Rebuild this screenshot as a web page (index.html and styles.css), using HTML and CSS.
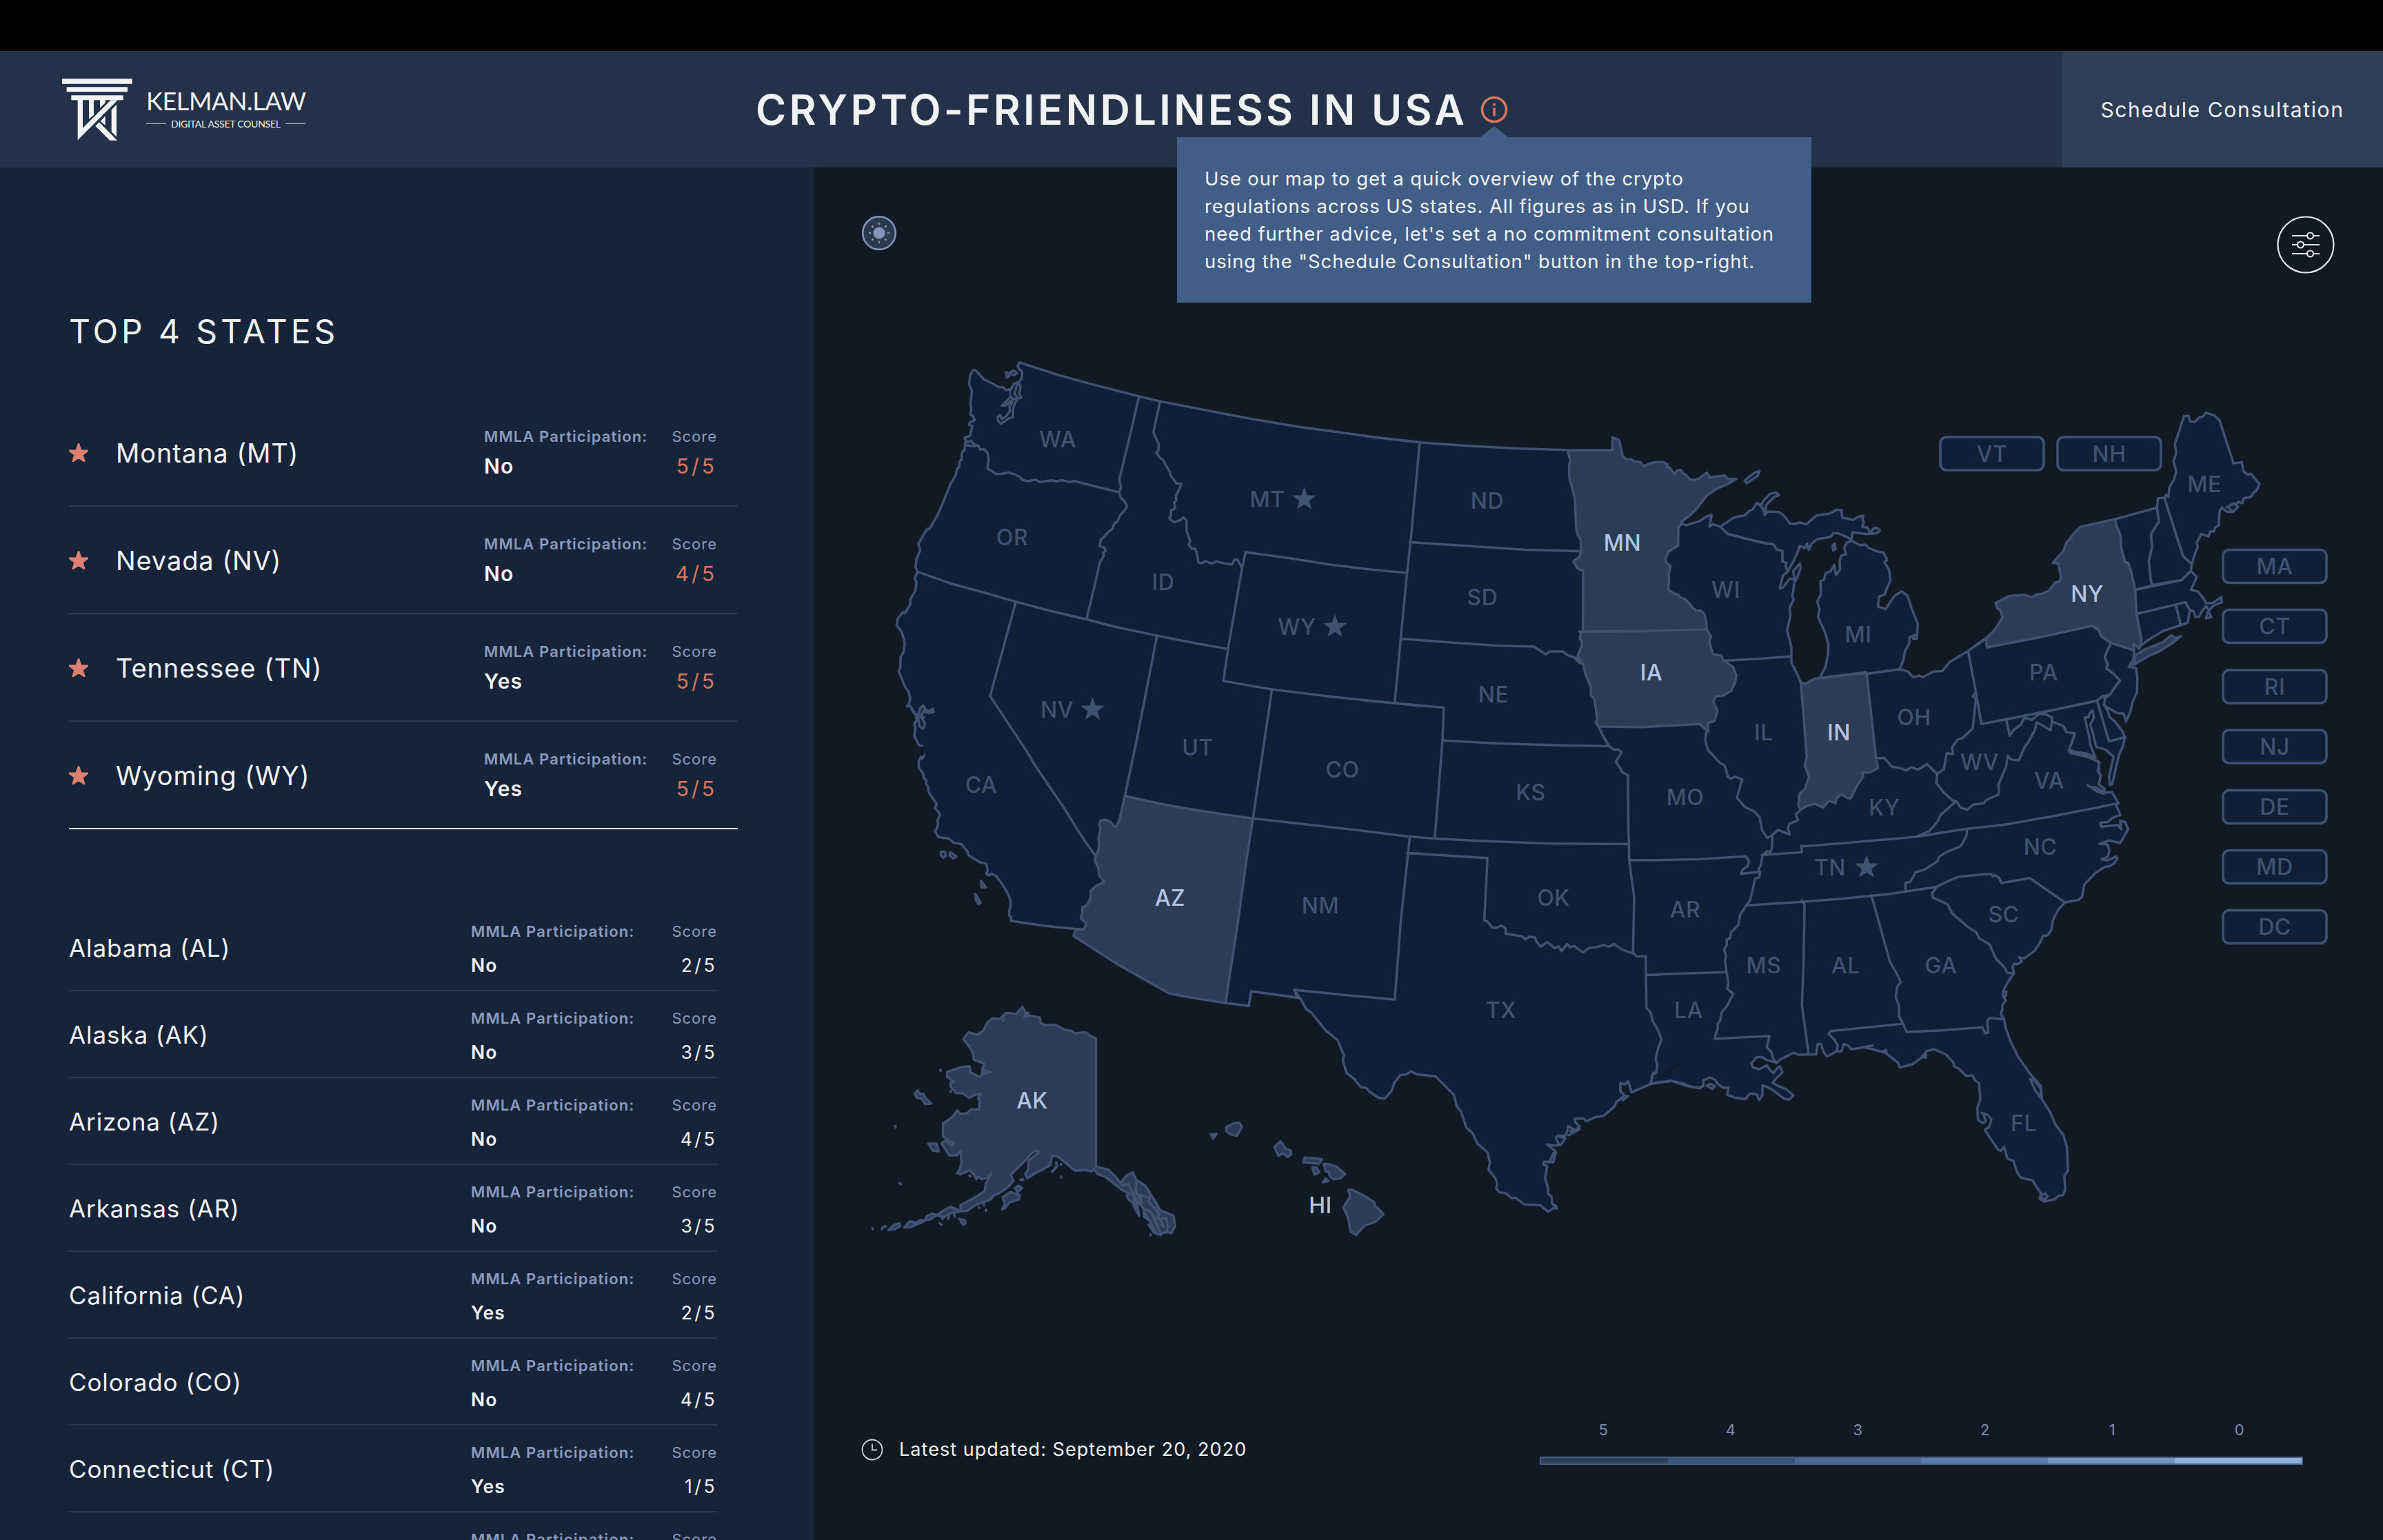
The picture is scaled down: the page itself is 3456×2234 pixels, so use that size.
FILE: index.html
```html
<!DOCTYPE html>
<html lang="en">
<head>
<meta charset="utf-8">
<title>Crypto-Friendliness in USA</title>
<link rel="stylesheet" href="styles.css">
</head>
<body>
<svg class="defs" width="0" height="0" aria-hidden="true">
  <symbol id="star" viewBox="-17 -17 34 32">
    <path d="M0-17 4.2-4.9 17-4.6 6.8 3.100 10.5 15 0 8-10.5 15-6.8 3.100-17-4.6-4.2-4.9Z"/>
  </symbol>
</svg>
<div class="page">
  <div class="system-bar"></div>

  <header class="header">
    <div class="brand">
      <svg class="brand-logo" viewBox="0 0 400 130" width="400" height="130">
        <g class="logo-mark" transform="scale(.33333)">
          <path d="M60 73H365V95H60ZM80 109H345V130H80ZM100 145H326V166H100Z"/>
          <path d="M128 160H150V287L272 166H302L128 340ZM177 160H198V230L177 248ZM225 160H248V178L225 200ZM297 185V325L275 303V208ZM227 258 248 235V275ZM205 278 222 262 300 341H268Z"/>
        </g>
        <text class="logo-name" x="142" y="69.5" textLength="232">KELMAN.LAW</text>
        <text class="logo-sub" x="178" y="95" textLength="159">DIGITAL ASSET COUNSEL</text>
        <path class="logo-rule" d="M142 89.3H171M344 89.3H373"/>
      </svg>
    </div>
    <div class="headline">
      <h1 class="title">CRYPTO-FRIENDLINESS IN USA</h1>
      <div class="info">
        <svg viewBox="0 0 40 40" width="40" height="40" class="info-icon">
          <circle cx="20" cy="20" r="17.5"/>
          <path d="M20 17.5V29.5M20 11V14.5"/>
        </svg>
        <div class="tooltip">Use our map to get a quick overview of the crypto<br>regulations across US states. All figures as in USD. If you<br>need further advice, let's set a no commitment consultation<br>using the "Schedule Consultation" button in the top-right.</div>
      </div>
    </div>
    <a class="schedule">Schedule Consultation</a>
  </header>

  <main class="main">
    <aside class="sidebar">
      <h2 class="sidebar-title">TOP 4 STATES</h2>
      <ul class="list top-list">
        <li class="row"><svg class="star" width="28" height="27"><use href="#star"/></svg><span class="name">Montana (MT)</span><div class="cell"><span class="label strong">MMLA Participation:</span><span class="value">No</span></div><div class="cell score"><span class="label">Score</span><span class="points">5/5</span></div></li>
        <li class="row"><svg class="star" width="28" height="27"><use href="#star"/></svg><span class="name">Nevada (NV)</span><div class="cell"><span class="label strong">MMLA Participation:</span><span class="value">No</span></div><div class="cell score"><span class="label">Score</span><span class="points">4/5</span></div></li>
        <li class="row"><svg class="star" width="28" height="27"><use href="#star"/></svg><span class="name">Tennessee (TN)</span><div class="cell"><span class="label strong">MMLA Participation:</span><span class="value">Yes</span></div><div class="cell score"><span class="label">Score</span><span class="points">5/5</span></div></li>
        <li class="row"><svg class="star" width="28" height="27"><use href="#star"/></svg><span class="name">Wyoming (WY)</span><div class="cell"><span class="label strong">MMLA Participation:</span><span class="value">Yes</span></div><div class="cell score"><span class="label">Score</span><span class="points">5/5</span></div></li>
      </ul>
      <ul class="list all-list">
        <li class="row"><span class="name">Alabama (AL)</span><div class="cell"><span class="label strong">MMLA Participation:</span><span class="value">No</span></div><div class="cell score"><span class="label">Score</span><span class="points">2/5</span></div></li>
        <li class="row"><span class="name">Alaska (AK)</span><div class="cell"><span class="label strong">MMLA Participation:</span><span class="value">No</span></div><div class="cell score"><span class="label">Score</span><span class="points">3/5</span></div></li>
        <li class="row"><span class="name">Arizona (AZ)</span><div class="cell"><span class="label strong">MMLA Participation:</span><span class="value">No</span></div><div class="cell score"><span class="label">Score</span><span class="points">4/5</span></div></li>
        <li class="row"><span class="name">Arkansas (AR)</span><div class="cell"><span class="label strong">MMLA Participation:</span><span class="value">No</span></div><div class="cell score"><span class="label">Score</span><span class="points">3/5</span></div></li>
        <li class="row"><span class="name">California (CA)</span><div class="cell"><span class="label strong">MMLA Participation:</span><span class="value">Yes</span></div><div class="cell score"><span class="label">Score</span><span class="points">2/5</span></div></li>
        <li class="row"><span class="name">Colorado (CO)</span><div class="cell"><span class="label strong">MMLA Participation:</span><span class="value">No</span></div><div class="cell score"><span class="label">Score</span><span class="points">4/5</span></div></li>
        <li class="row"><span class="name">Connecticut (CT)</span><div class="cell"><span class="label strong">MMLA Participation:</span><span class="value">Yes</span></div><div class="cell score"><span class="label">Score</span><span class="points">1/5</span></div></li>
        <li class="row"><span class="name"></span><div class="cell"><span class="label strong">MMLA Participation:</span></div><div class="cell score"><span class="label">Score</span></div></li>
      </ul>
    </aside>

    <section class="map-view">
      <div class="map-tools">
        <svg class="theme-icon" viewBox="-26 -26 52 52" width="52" height="52">
          <circle class="ring" r="23.8"/>
          <circle class="sun" r="8.5"/>
          <path class="rays" d="M0-15V-12M0 15V12M-15 0H-12M15 0H12M-10.6-10.6-8.5-8.5M10.6-10.6 8.5-8.5M-10.6 10.6-8.5 8.5M10.6 10.6 8.5 8.5"/>
        </svg>
        <svg class="filter-icon" viewBox="-43 -43 86 86" width="86" height="86">
          <circle r="40.5"/>
          <path d="M-20-13H2M11-13H20M-20 0H-12M-3 0H20M-20 13H2M11 13H20"/>
          <circle cx="6.5" cy="-13" r="4.5"/><circle cx="-7.5" cy="0" r="4.5"/><circle cx="6.5" cy="13" r="4.5"/>
        </svg>
      </div>

      <svg class="map" viewBox="1180 460 2276 1400" width="2276" height="1400">
        <!-- coastlines and outer states -->
        <g class="land" transform="translate(1260 500) scale(.5102 .35714)">
          <path d="M132 1568 130 1540 137 1525 134 1505 126 1490 118 1468 108 1468 114 1460 118 1435 112 1408 103 1390 85 1326 90 1310 90 1270 99 1248 102 1210 93 1165 79 1140 82 1113 98 1085 103 1090 118 1055 118 1035 132 1000 136 965 130 950 139 922 133 905 135 872 146 835 141 808 166 748 172 750 197 688 217 620 232 567 247 530 251 505 257 495 258 475 264 465 264 445 268 430 272 430 274 398 278 395 272 378 288 370 294 330 285 325 288 315 301 306 296 290 289 285 291 262 289 240 293 188 285 160 288 125 296 103 304 105 328 142 352 158 370 173 382 173 390 185 402 180 404 210 395 225 378 248 388 248 408 225 405 245 400 248 401 270 391 290 378 303 374 285 366 295 368 312 376 321 398 300 409 295 410 262 416 236 424 218 434 215 428 200 431 170 426 155 435 135 436 108 428 100 423 88 428 72 540 124 625 157 768 210 828 230 950 264 1090 302 1220 333 1340 356 1450 378 1568 396"/>
          <path d="M134 1500 142 1505 146 1478 155 1466 160 1480 170 1490 182 1480 184 1492 170 1496 156 1488 150 1505 156 1515M140 1510 144 1550 154 1560 160 1540 150 1515 140 1500M390 112 400 118 398 130 392 133ZM402 112 412 105 421 115 414 124 406 120ZM404 182 412 160 424 152 418 180 414 200 424 216 412 222 404 212"/>
        </g>
        <g class="land" transform="translate(1260 960) scale(.5102 .3444)">
          <path d="M609 1129 500 1112 405 1092 404 1075 399 1068 399 1045 403 1035 403 1008 395 975 380 938 362 902 348 892 342 900 334 893 338 880 334 850 316 845 284 816 280 798 262 767 242 763 228 745 198 738 188 713 194 700 197 680 195 668 203 643 188 615 193 598 185 582 170 548 168 525 163 515 163 498 157 490 153 468 142 445 142 420 148 400 152 408 162 385 160 355 143 352 129 312 133 285 130 262 137 245 134 225 118 188"/>
          <path d="M1092 660 1250 686 1400 711 1538 735 1533 806 1513 1080 1495 1423 1350 1403 1210 1382 1225 1416 1087 1388 1080 1450 1014 1437 1050 1090Z"/>
          <path d="M205 800 217 800 219 818 211 825 205 815ZM232 802 249 820 240 828 229 816ZM319 922 333 950 320 950ZM303 978 318 1015 311 1020 305 1005Z"/>
        </g>
        <g class="land" transform="translate(1980 600) scale(.4847 .4082)">
          <path d="M1062 402 1105 368 1135 362 1150 345 1158 342 1172 318 1185 325 1192 308 1212 285 1230 280 1238 290 1222 297 1200 325 1195 360 1205 348 1238 350 1252 362 1272 392 1285 392 1300 387 1320 393 1350 362 1390 355 1410 342 1425 343 1427 370 1443 373 1460 378 1473 368 1490 362 1488 378 1492 385 1487 402 1502 405 1512 425 1520 408 1532 406 1540 415 1532 425 1500 428 1458 422 1455 448 1440 438 1415 425 1400 425 1393 438 1350 447 1335 463 1327 485 1322 462 1315 478 1300 470 1295 490 1283 520 1265 560 1258 545 1260 530 1248 525 1248 488 1230 482 1222 465 1185 458 1085 428Z"/>
          <path d="M1135 238 1165 210 1180 204 1175 220 1142 248ZM1398 470 1404 462 1407 482 1400 487ZM1174 318 1188 335 1195 358"/>
        </g>
        <g class="land" transform="translate(2400 580) scale(.6633 .35714)">
          <path d="M430 572 448 590 460 588 468 602 485 615 500 620 508 650 502 660 512 690 515 735 505 775 503 790 490 800 488 840 505 850 515 820 525 795 540 778 552 795 562 850 575 912 573 970 565 970 568 955 557 965 556 990 547 1020 543 1060 535 1095 463 1113 462 1107 360 1130 373 1085 379 1030 379 990 372 945 357 882 360 850 355 820 363 790 362 737 370 730 373 705 385 695 392 670 396 712 405 690 404 655 407 633 418 628 414 600 420 580Z"/>
          <path d="M714 1317 768 1298 870 1260 967 1222 993 1387 1028 1370 1023 1410 1015 1440 1010 1480 1000 1560 995 1565 993 1530 1003 1450 985 1420 965 1410 957 1350 952 1320 960 1290 957 1262 950 1275 948 1290 940 1290 946 1340 950 1370 952 1400 963 1452 945 1437 920 1430 905 1425 912 1390 918 1355 900 1350 893 1325 880 1315 868 1308 868 1290 855 1278 840 1275 825 1300 808 1292 800 1320 785 1340 776 1365 768 1298Z"/>
          <path d="M724 968 726 1005 840 965 956 918 970 935 976 960 998 988 990 1015 984 1045 990 1075 987 1090 1003 1112 1017 1140 1005 1170 995 1197 978 1205 967 1222 870 1260 714 1317 700 1170 685 1020Z"/>
          <path d="M998 988 1048 1017 1046 1055 1036 1085 1052 1090 1055 1130 1054 1190 1045 1225 1040 1265 1030 1307 1025 1275 1010 1272 988 1248 980 1235 985 1212 995 1197 1005 1170 1017 1140 1003 1112 987 1090 990 1075 984 1045 990 1015Z"/>
          <path d="M967 1222 978 1205 984 1212 982 1240 990 1262 995 1290 1005 1305 1020 1340 1028 1370 993 1387 980 1305Z"/>
          <path d="M1006 485 1098 438 1102 495 1085 545 1087 600 1080 655 1085 740 1089 752 1050 772 1040 690 1035 662 1028 660 1020 605 1018 550 1010 515Z"/>
          <path d="M1098 438 1100 400 1114 398 1155 635 1174 668 1172 695 1152 732 1089 752 1085 740 1080 655 1087 600 1085 545 1102 495Z"/>
          <path d="M1114 398 1118 385 1123 395 1125 355 1135 325 1140 290 1134 250 1140 215 1137 180 1157 65 1167 65 1170 87 1180 90 1190 72 1198 68 1205 52 1225 65 1235 85 1262 240 1265 258 1283 253 1287 290 1297 305 1303 300 1322 342 1315 370 1310 375 1303 395 1287 400 1285 420 1275 415 1268 430 1260 455 1250 455 1240 437 1235 450 1233 510 1225 520 1222 535 1215 535 1210 555 1195 545 1185 580 1187 600 1182 620 1174 668 1155 635Z"/>
          <path d="M1050 772 1152 732 1172 695 1185 720 1180 740 1172 772 1187 778 1200 808 1205 825 1220 825 1238 802 1240 822 1222 835 1212 855 1205 838 1195 862 1190 882 1182 882 1178 858 1170 855 1160 822 1139 832 1053 870Z"/>
          <path d="M1053 870 1139 832 1150 915 1110 940 1075 980 1056 1010 1064 975Z"/>
          <path d="M1139 832 1160 822 1170 855 1165 905 1150 915Z"/>
          <path d="M1205 888 1210 860 1217 882ZM1250 437 1266 420 1275 435 1264 455 1256 440M910 1425 935 1440 960 1447"/>
        </g>
        <g class="land" transform="translate(2400 1100) scale(.4847 .4209)">
          <path d="M1305 0 1330 15 1325 45 1335 60 1328 90 1345 105 1343 122 1325 115 1295 93 1315 98 1345 118 1368 117 1387 155 1380 160 1393 195 1370 205 1355 220 1333 222 1335 236 1365 232 1385 230 1395 245 1392 215 1408 220 1416 245 1392 292 1360 283 1330 295 1355 297 1360 320 1355 340 1336 348 1355 352 1380 338 1384 345 1375 362 1360 372 1345 375 1318 395 1285 435 1278 478 1268 488 1227 497 1208 520 1190 560 1187 590 1175 610 1162 612 1150 640 1135 665 1105 690 1090 685 1098 700 1085 710 1075 708 1070 720 1075 740 1058 768 1045 795 1042 820 1050 835 1040 850 1040 865 1035 880 1045 900 1050 930 1062 970 1085 1025 1118 1080 1155 1130 1158 1175 1183 1220 1200 1265 1222 1298 1233 1340 1236 1420 1225 1440 1228 1485 1222 1505 1208 1508 1195 1520 1165 1528 1152 1518 1155 1500 1130 1455 1095 1445 1083 1425 1073 1388 1055 1380 1045 1340 1035 1353 1028 1350 998 1300 988 1280 1000 1270 1007 1245 997 1230 978 1222 985 1230 990 1250 982 1258 967 1247 965 1205 974 1175 970 1120 958 1110 950 1093 932 1095 910 1070 895 1062 893 1048 870 1020 835 1003 812 1010 800 1030 770 1055 733 1066 728 1050 690 1015 650 1002 632 998 650 990 615 998 588 1003 578 990 565 985 558 1010 543 1010 515 1028 505 1012 497 985 487 985 483 1020 430 1022 415 1015 375 1038 365 1050 350 1045 335 1040 320 1030 305 1030 288 1052 293 1065 312 1072 335 1058 345 1075 355 1085 368 1065 374 1062 382 1082 370 1095 352 1118 370 1130 392 1140 415 1162 400 1178 380 1168 355 1145 335 1132 322 1128 322 1160 312 1178 305 1158 285 1155 270 1175 240 1170 217 1160 220 1135 205 1135 190 1125 180 1108 165 1100 145 1110 145 1130 130 1135 100 1130 50 1112 0 1118"/>
          <path d="M155 1128 165 1122 180 1130 172 1140ZM1123 1105 1135 1110 1155 1140 1155 1170 1138 1145ZM1155 1505 1168 1500 1175 1510 1168 1520 1158 1516ZM1042 805 1052 805 1050 820 1042 822ZM685 1008 692 1005 694 1020ZM800 1025 812 1020 810 1032Z"/>
        </g>
        <g class="land" transform="translate(1800 1200) scale(.5102 .38265)">
          <path d="M152 615 158 640 170 652 185 690 200 703 240 770 275 808 280 825 292 865 289 885 300 932 322 955 340 985 355 988 365 1003 390 1025 407 1030 428 1000 435 970 452 940 470 937 483 925 500 937 553 945 605 1015 613 1058 625 1078 640 1138 658 1160 672 1200 700 1232 707 1270 703 1298 722 1330 728 1350 725 1370 733 1383 752 1388 770 1407 780 1405 805 1430 850 1433 873 1458 890 1442 897 1445 895 1435 885 1430 882 1400 872 1388 873 1370 864 1330 870 1285 858 1278 862 1268 875 1270 893 1228 870 1203 890 1207 905 1205 895 1180 900 1168 920 1170 925 1160 930 1133 950 1150 962 1135 950 1118 948 1105 975 1105 980 1115 1010 1098 1030 1095 1060 1060 1068 1040 1090 1018 1078 1000 1078 970 1090 975 1100 963 1105 985 1110 1005 1165 973 1225 962 1250 968 1275 983 1305 990"/>
          <path d="M877 1270 887 1270 895 1232 888 1235ZM930 1168 962 1145 935 1152M908 1205 922 1180 903 1172M1085 1035 1100 1020 1090 1018"/>
        </g>

        <!-- interior land -->
        <path class="core" d="M1335 1035 1332 1054 1750 780 2050 655 2300 900 2730 1060 3020 1104 2402 1565 1879 1432 1850 1420 1780 1440 1600 1345 1572 1344Z"/>
        <path class="core" d="M1328 1034 1352 1140 1400 1212 1568 1342 1600 1300 1345 1030ZM3026 1103 2950 1195 2500 1540 2406 1566 2406 1555 3000 1100ZM1350 1020 1700 780 2040 650 2050 700 1400 1060ZM1900 1430 1910 1460 2300 1560 2380 1567 2425 1566 2450 1572 2480 1560 2300 1500Z"/>
        <path class="core" transform="translate(1980 600) scale(.4847 .4082)" d="M0 84 80 95 160 106 300 118 450 128 600 133 740 134 936 406 960 400 1000 385 1022 368 1033 365 1030 405 1040 397 1062 406 1085 432 1185 462 1218 469 1228 486 1244 492 1244 528 1256 534 1254 549 1261 560 1246 585 1240 622 1250 615 1272 582 1280 555 1298 540 1300 548 1286 590 1280 600 1274 650 1278 660 1266 690 1268 720 1258 770 1271 830 1271 885 1286 920 1299 955 1318 964 1345 946 1500 926 1568 914 1568 1568 0 1568Z"/>
        <path class="core" transform="translate(2400 580) scale(.6633 .35714)" d="M462 1107 535 1099 553 1108 565 1132 578 1125 587 1132 611 1108 628 1107 646 1070 685 1027 714 1317 768 1300 776 1365 795 1330 808 1295 825 1303 840 1279 868 1312 893 1329 900 1354 915 1359 909 1390 903 1425 942 1450 966 1468 968 1520 968 1568 400 1568Z"/>

        <!-- highlighted states -->
        <g class="land hot" transform="translate(1260 960) scale(.5102 .3444)">
          <path d="M728 565 820 595 900 618 1020 645 1092 660 1072 850 1050 1090 1014 1437 935 1419 855 1398 710 1277 582 1155 585 1138 597 1125 609 1129 616 1115 617 1100 603 1080 607 1055 607 1035 622 1022 631 993 631 965 645 945 669 927 656 902 652 865 643 840 645 818 651 800 655 775 653 745 659 703 655 685 658 670 672 665 688 675 697 693 703 693 712 668Z"/>
        </g>
        <g class="land hot" transform="translate(1980 600) scale(.4847 .4082)">
          <path d="M605 130 740 130 740 84 760 94 770 150 782 163 795 162 805 170 823 172 832 187 850 178 868 172 890 172 905 180 902 190 912 193 924 215 933 202 944 200 950 212 960 218 970 233 985 236 1000 230 1022 210 1030 226 1075 220 1085 232 1110 232 1085 250 1050 268 1022 292 990 340 968 365 945 385 948 393 937 402 936 470 908 490 898 515 900 528 914 542 908 570 909 595 906 625 925 640 935 643 945 655 958 660 970 675 978 688 990 700 1003 700 1015 712 1020 740 1022 768 830 773 651 774 652 560 645 555 635 550 623 525 640 510 646 490 645 450 635 430 631 405 627 300 610 225 610 185 613 165Z"/>
          <path d="M640 774 830 773 1022 767 1030 785 1035 790 1029 810 1040 855 1065 860 1072 878 1100 900 1110 930 1107 955 1095 985 1070 1003 1048 1005 1042 1025 1054 1055 1045 1092 1025 1100 1026 1130 1000 1103 830 1114 698 1112 690 1098 694 1085 686 1015 675 1000 675 970 660 930 652 890 640 880 636 860 648 825 648 808 642 800 645 778Z"/>
          <path d="M1303 955 1318 960 1345 942 1500 922 1515 1080 1528 1222 1534 1260 1510 1275 1488 1276 1490 1290 1472 1322 1462 1345 1452 1368 1440 1365 1425 1352 1408 1370 1408 1385 1388 1375 1370 1400 1345 1387 1320 1395 1302 1408 1296 1390 1300 1350 1315 1335 1328 1290 1315 1250 1321 1220 1312 1080Z"/>
        </g>
        <g class="land hot" transform="translate(2400 580) scale(.6633 .35714)">
          <path d="M724 968 726 1005 840 965 956 918 970 935 976 960 998 988 1048 1017 1046 992 1060 1010 1064 975 1053 870 1050 770 1040 690 1035 662 1028 660 1020 605 1018 550 1010 515 1006 485 931 515 920 535 900 580 893 615 870 662 882 665 888 720 885 738 875 742 862 775 845 788 832 792 825 802 808 792 775 797 745 825 750 850 755 852 760 882 750 915 740 940Z"/>
          <path d="M1050 1060 1048 1040 1070 1015 1110 985 1130 955 1138 968 1150 960 1130 990 1100 1025 1080 1040 1060 1062 1045 1078Z"/>
        </g>
        <g class="land hot" transform="translate(1240 1440) scale(.5102 .33333)">
          <path d="M685 200 685 757 720 770 740 800 755 830 772 795 790 782 800 815 825 840 850 900 868 948 905 970 910 1015 900 1047 885 1040 870 1050 850 1020 835 980 820 940 800 900 775 870 760 860 740 835 710 800 690 790 680 768 672 778 655 772 625 775 610 755 590 730 575 712 560 710 555 750 535 768 510 788 490 808 484 790 492 770 494 730 525 692 512 688 498 705 475 745 443 792 450 820 430 852 410 872 395 882 385 900 345 922 318 950 300 950 300 925 340 892 368 865 372 830 388 785 378 805 360 812 350 800 345 812 340 795 325 772 300 790 290 785 298 770 303 740 300 690 290 708 268 708 250 665 246 655 262 640 250 625 250 570 278 540 290 512 300 528 318 525 330 508 352 508 355 470 350 460 358 440 340 445 325 458 305 437 288 437 272 410 272 390 280 388 262 365 262 345 300 325 325 320 328 335 325 345 355 367 364 350 362 330 368 310 338 292 335 262 325 235 308 203 322 173 350 182 365 165 375 133 390 112 410 115 422 100 430 88 458 92 476 62 486 90 500 102 525 108 528 132 540 142 570 140 597 163 615 165 625 178 655 172 672 190Z"/>
          <path d="M262 642 282 655 275 665 265 655ZM362 335 385 345 370 352 362 348ZM170 440 178 425 184 442 195 440 200 458 217 482 200 485 190 462 175 456ZM208 657 232 657 238 690 222 688ZM420 890 435 875 442 868 468 880 466 900 440 912 425 940 418 942 426 920ZM455 850 465 840 475 850 462 868ZM470 815 478 815 476 810ZM300 950 272 932 250 950 233 968 250 978 272 960 290 955ZM200 985 205 972 220 962 233 968 210 990ZM140 1022 155 995 168 997 168 1006 185 990 200 990 190 1000 170 1012 160 1020ZM95 1033 112 1010 125 1003 129 1014 112 1030ZM50 1024V1030M76 1028 80 1020M86 1015V1020M115 580V588M126 828 131 834M243 335V342M272 428V432M586 745V750M586 800V806M352 932V936M366 920V926M372 944V950M240 1002 246 1010M295 985 312 990 314 1005 308 1010 300 995M268 965 265 985M280 955 284 975M255 975 248 985M424 110 421 122M492 88 490 105M480 108 488 88M325 795 328 800M600 740 605 745M560 780 575 755 572 740"/>
          <path d="M760 840 778 832 785 860 800 900 808 972 796 940 790 915 778 900 772 880 790 875 800 868M800 815 798 860 815 915 810 880 830 890M838 885 835 910 845 930 860 950 864 985 850 975 838 950 820 940 822 975 835 990M825 960 840 1000 858 1050 870 1055 862 1020 850 985 842 960M835 1010 850 1045M870 985 885 980 890 1020 884 1045M868 990 878 1020 870 1010M840 1050V1055M790 885 800 930M850 935 866 965"/>
          <path d="M1055 585 1078 567 1093 567 1100 583 1086 623 1068 617 1055 602ZM1012 617 1028 615 1018 635ZM1192 672 1210 647 1225 680 1238 685 1240 702 1230 715 1215 698 1204 710ZM1278 718 1300 720 1328 725 1318 745 1274 738ZM1300 760 1312 762 1320 782 1306 792ZM1332 745 1350 748 1370 758 1393 790 1380 808 1362 812 1350 800 1347 780 1338 778ZM1338 808 1346 820 1330 825ZM1402 858 1412 857 1445 882 1476 912 1478 932 1485 935 1502 965 1480 997 1450 1013 1438 1030 1425 1055 1408 1038 1402 980 1388 935 1408 888Z"/>
        </g>

        <!-- state borders -->
        <g class="border" transform="translate(1260 500) scale(.5102 .35714)">
          <path d="M274 398 290 390 300 405 312 412 316 426 328 424 338 440 341 465 337 502 362 526 375 525 398 519 415 527 430 538 438 550 455 554 472 548 488 558 505 554 520 551 535 555 548 550 572 558 582 553 620 567 712 600M276 408 300 413 310 408"/>
          <path d="M768 210 749 330 712 548 717 578 712 600 716 620 728 638 734 655 728 672 716 690 706 718 698 727 692 748 680 762 660 793 656 818 670 825 674 837 666 845 668 858 656 888 645 960 619 1114"/>
          <path d="M139 922 228 968 330 1008 418 1044 520 1083 619 1116 700 1146 819 1182 930 1213 1021 1236"/>
          <path d="M828 230 809 355 816 380 824 402 823 430 817 438 828 460 836 468 856 518 858 532 875 565 889 565 873 615 874 632 868 642 871 665 859 673 859 692 854 706 867 721 885 713 895 702 903 715 903 755 914 798 909 812 918 829 928 829 933 850 937 885 945 888 958 879 975 890 988 880 1008 888 1032 893 1040 873 1048 873 1061 907"/>
          <path d="M1530 927 1420 912 1310 893 1200 868 1071 843 1061 907 1021 1236 1008 1366 1145 1400 1330 1432 1495 1456 1568 1468"/>
          <path d="M1566 396 1540 800 1530 927 1512 1195 1495 1456M418 1044 345 1427"/>
          <path d="M132 1568 130 1540 137 1525 134 1505 126 1490 118 1468"/>
          <path d="M134 1500 142 1505 146 1478 155 1466 160 1480 170 1490 182 1480 184 1492 170 1496 156 1488 150 1505 156 1515M140 1510 144 1550 154 1560 160 1540 150 1515 140 1500"/>
        </g>
        <g class="border" transform="translate(1260 960) scale(.5102 .3444)">
          <path d="M345 145 412 295 448 375 470 430 520 540 558 622 590 700 615 757 645 818M819-110 805 0 760 340 728 565M1146 116 1092 660M1092 660 1250 686 1400 711 1538 737M1533 806 1575 809M1538 737 1533 806 1513 1080 1495 1423 1350 1403 1210 1382 1225 1416 1087 1388 1080 1450 1014 1437"/>
        </g>
        <g class="border" transform="translate(1980 600) scale(.4847 .4082)">
          <path d="M0 80 80 91 160 102 300 114 450 124 600 129M133 457 300 470 480 484 646 489M107 800 250 813 400 825 505 828 540 856 552 845 590 845 605 858 625 866 640 885 652 890M630 868 645 876"/>
          <path d="M0 1020 100 1030 235 1045 231 1162 208 1510M231 1162 400 1172 550 1178 730 1182M698 1112 710 1142 728 1180 745 1195 757 1193 767 1203 750 1237 770 1275 786 1285 787 1450 789 1530M133 1503 208 1510 350 1519 560 1528 789 1530"/>
          <path d="M945 390 960 397 1000 382 1022 365 1036 360 1030 402 1040 393 1062 402 1085 428 1185 458 1222 465 1230 482 1248 488 1248 525 1260 530 1258 545 1265 560 1250 575 1240 622 1250 618 1270 587 1285 590 1280 560 1300 533 1303 548 1290 590 1284 600 1278 650 1282 660 1270 690 1272 720 1262 770 1275 830 1275 885 1290 920 1303 955M1072 878 1180 871 1275 863"/>
          <path d="M1302 1408 1288 1425 1295 1445 1268 1458 1265 1475 1270 1495 1235 1480 1215 1500M1026 1130 1020 1135 1017 1160 1025 1195 1060 1240 1075 1250 1085 1290 1095 1298 1107 1290 1128 1300 1112 1365 1135 1397 1165 1415 1180 1435 1187 1480 1203 1508 1215 1500"/>
        </g>
        <g class="border" transform="translate(2400 580) scale(.6633 .35714)">
          <path d="M463 1113 535 1095 553 1103 565 1127 578 1120 585 1127 610 1103 628 1102 645 1065 685 1020 724 968M685 1020 700 1170 714 1317 768 1298 776 1365 785 1340 800 1320 808 1292 825 1300 840 1275 855 1278 868 1290 868 1308 880 1315 893 1325 900 1350 918 1355 912 1390 905 1425 935 1440 963 1452"/>
          <path d="M700 1190 695 1205 702 1215 695 1335 672 1375 662 1380 650 1410 652 1440 638 1435 632 1500 617 1520M486 1455 502 1455 518 1490 535 1495 550 1505 560 1492 575 1502 595 1480 617 1520M835 1310 865 1342 868 1308M835 1310 830 1345 815 1395 810 1405 795 1465 778 1460 772 1445 768 1490 750 1568M905 1425 908 1435 945 1450 970 1468 972 1520"/>
        </g>
        <g class="border" transform="translate(2400 1100) scale(.4847 .4209)">
          <path d="M320 333 440 324 438 302 450 303 560 293 780 271 850 258 935 243 1050 228 1200 198 1387 155M352 272 350 310 345 325 335 320 322 335 317 370 310 380 315 395 312 410 300 415 290 465 285 490 275 505 255 540 250 575 228 600 225 620 215 625 215 645 207 660 213 680 210 700 215 740 220 770 217 795 235 812 215 855 200 875 195 905 188 915 188 935 182 950 180 967 343 957 335 995 350 1015 355 1040 365 1048"/>
          <path d="M1305 0 1330 15 1325 45 1335 60 1328 90 1345 105 1343 122 1325 115 1295 93M145 1130 130 1135 100 1130 50 1112 0 1118"/>
          <path d="M0 351 130 348 272 338 282 355 278 370 262 385 258 398 310 392M0 745 215 737M275 507 440 495 560 484 700 468 843 443M440 490 448 505 445 700 440 850 460 1020M648 472 703 700 725 745 736 772 726 785 720 823 730 850 731 890 743 915M543 1010 547 990 537 970 520 950 525 940 743 915 753 943 860 938 980 927 988 948 997 945 995 905 1002 895 1045 900"/>
          <path d="M843 443 830 465 832 480 875 502 890 535 935 580 962 600 970 620 1002 642 1020 690 1045 720 1055 740 1075 740M843 443 880 422 910 408 1005 398 1012 408 1017 402 1030 412 1037 430 1122 413 1227 497M935 243 932 268 915 303 890 315 870 325 850 340 845 355 808 383 780 393 765 425 750 430 750 455M780 271 820 252 845 220 855 195 902 148 893 148 862 115 842 85 845 55M1030 97 1028 125 990 145 985 155 952 160 935 177 915 170 902 148"/>
        </g>
        <g class="border" transform="translate(1800 1200) scale(.5102 .38265)">
          <path d="M1165 973 1168 940 1180 930 1183 900 1178 880 1185 840 1195 805 1185 770 1170 735 1163 700 1152 685 1150 488 1125 490 1117 480M1172 930 1165 968M472 98 700 117 697 200 691 353 700 357 713 380 728 380 740 373 752 385 752 403 800 415 808 425 820 415 835 418 840 435 852 452 870 435 890 458 903 452 910 470 927 443 935 455 947 450 971 475 990 457 1010 455 1030 447 1045 453 1060 443 1085 465 1117 480 1114 470 1117 265 1103 125 1102 64M1103 125 1180 125M1152 560 1190 559"/>
          <path d="M152 615 158 640 170 652 185 690M1068 1040 1090 1018 1078 1000 1078 970 1090 975 1100 963 1105 985 1110 1005 1165 973 1176 970"/>
        </g>

        <!-- labels -->
        <g class="abbr">
          <text x="1534" y="649">WA</text><text x="1468" y="791">OR</text><text x="1687" y="856">ID</text><text x="1838" y="736">MT</text><text x="1881" y="921">WY</text><text x="1533" y="1041">NV</text><text x="1737" y="1096">UT</text><text x="1423" y="1150">CA</text><text x="1947" y="1128">CO</text><text x="1915" y="1325">NM</text><text x="2157" y="738">ND</text><text x="2150" y="878">SD</text><text x="2166" y="1019">NE</text><text x="2220" y="1161">KS</text><text x="2253" y="1314">OK</text><text x="2177" y="1477">TX</text><text x="2503" y="867">WI</text><text x="2695" y="932">MI</text><text x="2558" y="1074">IL</text><text x="2444" y="1168">MO</text><text x="2776" y="1052">OH</text><text x="2964" y="987">PA</text><text x="3197" y="714">ME</text><text x="2871" y="1117">WV</text><text x="2972" y="1144">VA</text><text x="2733" y="1183">KY</text><text x="2959" y="1240">NC</text><text x="2654" y="1270">TN</text><text x="2906" y="1338">SC</text><text x="2815" y="1412">GA</text><text x="2677" y="1412">AL</text><text x="2558" y="1412">MS</text><text x="2449" y="1477">LA</text><text x="2444" y="1331">AR</text><text x="2935" y="1641">FL</text>
          <use href="#star" x="1874" y="706" width="35" height="33"/><use href="#star" x="1918.500" y="891" width="35" height="33"/><use href="#star" x="1567" y="1011" width="35" height="33"/><use href="#star" x="2689.500" y="1240" width="35" height="33"/>
        </g>
        <g class="abbr abbr-hot">
          <text x="1697" y="1314">AZ</text><text x="2353" y="799">MN</text><text x="2395" y="987">IA</text><text x="2667" y="1074">IN</text><text x="3027" y="873">NY</text><text x="1497" y="1608">AK</text><text x="1915" y="1760">HI</text>
        </g>

        <!-- small-state buttons -->
        <g class="chips">
          <rect x="2814" y="634" width="150" height="48" rx="9"/><rect x="2984" y="634" width="150" height="48" rx="9"/>
          <rect x="3224" y="797.500" width="150" height="48" rx="9"/><rect x="3224" y="884.500" width="150" height="48" rx="9"/><rect x="3224" y="972" width="150" height="48" rx="9"/><rect x="3224" y="1059" width="150" height="48" rx="9"/><rect x="3224" y="1146.500" width="150" height="48" rx="9"/><rect x="3224" y="1233.500" width="150" height="48" rx="9"/><rect x="3224" y="1320.500" width="150" height="48" rx="9"/>
        </g>
        <g class="abbr">
          <text x="2889" y="670">VT</text><text x="3059" y="670">NH</text><text x="3299" y="833">MA</text><text x="3299" y="920">CT</text><text x="3299" y="1008">RI</text><text x="3299" y="1095">NJ</text><text x="3299" y="1182">DE</text><text x="3299" y="1269">MD</text><text x="3299" y="1356">DC</text>
        </g>
      </svg>

      <div class="map-footer">
        <div class="updated">
          <svg class="clock" viewBox="0 0 32 32" width="32" height="32"><circle cx="16" cy="16" r="14.500"/><path d="M16 7.500V16.500H23"/></svg>
          <span>Latest updated: September 20, 2020</span>
        </div>
        <div class="legend">
          <div class="legend-labels"><span>5</span><span>4</span><span>3</span><span>2</span><span>1</span><span>0</span></div>
          <div class="legend-bar"><i class="s5"></i><i class="s4"></i><i class="s3"></i><i class="s2"></i><i class="s1"></i><i class="s0"></i></div>
        </div>
      </div>
    </section>
  </main>
</div>
</body>
</html>
```
FILE: styles.css
```css
* { box-sizing: border-box; }
body { margin: 0; background: #0f1a25; font-family: Inter, "Open Sans", sans-serif; color: #f0f2f5; }
h1, h2, ul { margin: 0; padding: 0; font-weight: 400; }
ul { list-style: none; }
.defs { display: block; position: absolute; }
.page { width: 3456px; height: 2234px; overflow: hidden; display: grid; grid-template-rows: 74px 169px 1991px; }
.system-bar { background: #000; }

.header { display: grid; grid-template-columns: 1096px 1fr 466px; background: #233248; }
.brand { padding: 16px 0 0 70px; }
.brand-logo { display: block; }
.logo-mark { fill: #f0f2f5; }
.logo-name { font: 400 36px Lato, sans-serif; fill: #f0f2f5; }
.logo-sub { font: 400 14px Lato, sans-serif; fill: #f0f2f5; }
.logo-rule { stroke: #9aa5b3; stroke-width: 1.500px; }
.headline { display: flex; align-items: center; gap: 21px; }
.title { flex: none; width: 1030px; font-size: 60px; line-height: 72px; font-weight: 600; letter-spacing: 4.300px; white-space: nowrap; }
.info { position: relative; z-index: 2; width: 40px; height: 40px; }
.info-icon { display: block; fill: none; stroke: #d9755f; stroke-width: 3.600px; }
.tooltip { position: absolute; left: -440px; top: 60px; width: 920px; height: 240px; padding: 40px 40px; background: #435e86; font-size: 27.500px; line-height: 40px; letter-spacing: .9px; white-space: nowrap; }
.tooltip::before { content: ""; position: absolute; left: 440px; top: -16px; border: solid transparent; border-width: 0 20px 16px; border-bottom-color: #435e86; }
.schedule { display: flex; align-items: center; justify-content: center; background: #2d3f56; font-size: 30px; letter-spacing: 1.600px; white-space: nowrap; }

.main { display: grid; grid-template-columns: 1180px 1fr; }
.sidebar { height: 1991px; overflow: hidden; padding: 209px 0 0 100px; background: linear-gradient(#152537 0, #152537 26px, #16243a 36px); }
.sidebar-title { font-size: 48px; line-height: 58px; letter-spacing: 4.900px; font-weight: 400; margin-bottom: 69px; }
.row { display: grid; align-items: center; border-bottom: 2px solid #2a394f; }
.cell { display: flex; flex-direction: column; align-items: flex-start; white-space: nowrap; }
.score { align-items: flex-end; }
.label { font-size: 22px; line-height: 26px; color: #8a9bbd; letter-spacing: 1px; }
.strong { font-weight: 600; letter-spacing: 1.100px; }
.value { font-weight: 600; letter-spacing: 1.200px; }
.points { letter-spacing: 3.500px; }
.name { font-weight: 400; letter-spacing: .9px; white-space: nowrap; padding-top: 2px; }
.top-list .row { height: 156px; width: 970px; padding-right: 30px; grid-template-columns: 68px 534px 1fr auto; }
.top-list .row:last-child { border-color: #f0f2f5; }
.top-list .cell { gap: 10px; padding-top: 3px; }
.top-list .name { font-size: 38px; line-height: 44px; }
.top-list .value, .top-list .points { font-size: 30px; line-height: 40px; }
.top-list .points { color: #d9755f; letter-spacing: 4px; }
.star { fill: #dc8070; stroke: #dc8070; stroke-width: 2.500px; stroke-linejoin: round; display: block; }
.all-list { margin-top: 109px; }
.all-list .row { height: 126px; width: 940px; grid-template-columns: 583px 1fr auto; }
.all-list .row:last-child { align-items: start; }
.all-list .row:last-child .cell { padding-top: 26px; }
.all-list .cell { gap: 18px; padding-top: 8px; }
.all-list .name { font-size: 35px; line-height: 40px; }
.all-list .value, .all-list .points { font-size: 26.500px; line-height: 36px; }

.map-view { display: grid; grid-template-rows: 217px 1400px 374px; background: #0f1a25; }
.map-tools { display: flex; justify-content: space-between; align-items: flex-start; padding: 69px 69px 0; }
.ring { fill: #2b3a4c; stroke: #8195b8; stroke-width: 2.600px; }
.sun { fill: #8195b8; }
.rays { stroke: #8195b8; stroke-width: 2.500px; }
.filter-icon { fill: none; stroke: #dfe6f0; stroke-width: 2.200px; }
.map { display: block; }
.core { fill: #0f1f38; }
.land path, .border path { stroke: #3f5271; stroke-width: 3.500px; stroke-linejoin: round; stroke-linecap: round; vector-effect: non-scaling-stroke; }
.land { fill: #0f1f38; }
.hot { fill: #2c3c56; }
.border { fill: none; }
.abbr { font-size: 32px; font-weight: 500; letter-spacing: .5px; text-anchor: middle; fill: #3f5271; }
.abbr-hot { fill: #b4c5e2; }
.chips { fill: #0f1f38; stroke: #3c5272; stroke-width: 3.600px; }

.map-footer { display: flex; justify-content: space-between; align-items: flex-start; padding: 201px 116px 0 69px; }
.updated { display: flex; align-items: center; gap: 23px; margin-top: 24px; font-size: 27px; line-height: 36px; letter-spacing: 1.050px; white-space: nowrap; }
.clock { fill: none; stroke: #c9d2de; stroke-width: 1.800px; }
.legend { width: 1107px; }
.legend-labels { display: grid; grid-template-columns: repeat(6, 1fr); text-align: center; font-size: 22px; line-height: 26px; color: #7d8fae; margin-bottom: 26px; }
.legend-bar { display: grid; grid-template-columns: repeat(6, 1fr); height: 12px; border: 2px solid #466085; }
.s5 { background: #2e4055; }
.s4 { background: #385377; }
.s3 { background: #4a6890; }
.s2 { background: #5b7da8; }
.s1 { background: #7396bf; }
.s0 { background: #8db0d9; }
```
